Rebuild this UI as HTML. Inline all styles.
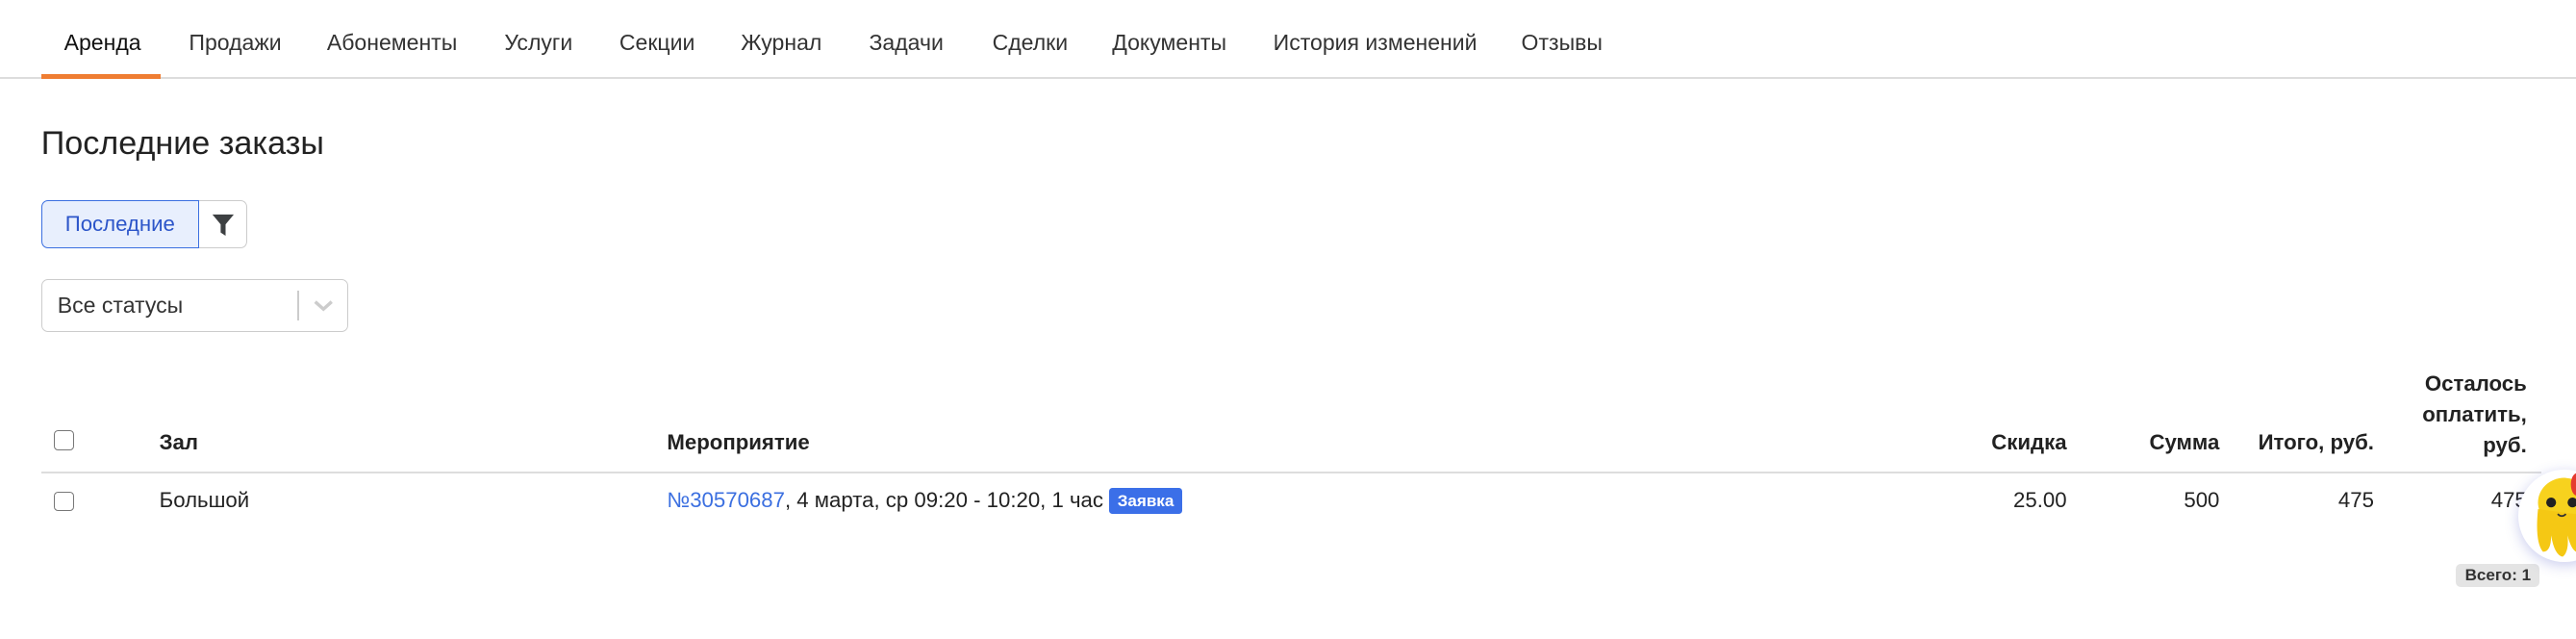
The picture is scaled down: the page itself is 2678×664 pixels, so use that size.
<!DOCTYPE html>
<html><head><meta charset="utf-8"><style>
html,body{margin:0;padding:0;background:#fff;overflow:hidden}
body{width:2678px;height:664px}
#r{zoom:1.70791;position:relative;width:1568px;height:389px;font-family:"Liberation Sans",Arial,sans-serif;color:#222}
.a{position:absolute;white-space:nowrap}
.tab{font-size:13.5px;color:#333;top:18px}
.th{font-weight:bold;font-size:13px;color:#222}
.td{font-size:13px;color:#222;top:297px}
.cb{position:absolute;width:11px;height:11px;border:1px solid #777;border-radius:2.5px;background:#fff}
</style></head><body><div id="r">
<div class="a tab" style="left:39px;color:#111">Аренда</div>
<div class="a tab" style="left:115px">Продажи</div>
<div class="a tab" style="left:199px">Абонементы</div>
<div class="a tab" style="left:307px">Услуги</div>
<div class="a tab" style="left:377px">Секции</div>
<div class="a tab" style="left:451px">Журнал</div>
<div class="a tab" style="left:529px">Задачи</div>
<div class="a tab" style="left:604px">Сделки</div>
<div class="a tab" style="left:677px">Документы</div>
<div class="a tab" style="left:775px">История изменений</div>
<div class="a tab" style="left:926px">Отзывы</div>
<div class="a" style="left:0;top:47px;width:1568px;height:1px;background:#ddd"></div>
<div class="a" style="left:25px;top:45px;width:73px;height:3px;background:#ef7d32"></div>

<div class="a" style="left:25px;top:76px;font-size:20px;color:#222">Последние заказы</div>

<div class="a" style="left:25px;top:122px;width:95px;height:28px;border:1px solid #3b6fe0;border-radius:4px 0 0 4px;background:#e8effd;color:#2c55c9;font-size:13px;line-height:28px;text-align:center">Последние</div>
<div class="a" style="left:121px;top:122px;width:29px;height:28px;border:1px solid #ccc;border-left:none;border-radius:0 4px 4px 0"></div>
<svg class="a" style="left:129px;top:130px" width="14" height="14" viewBox="0 0 14 14"><path d="M0.5 0.5H13.5L8.5 6.5V13.5L5.5 11.5V6.5Z" fill="#3d4042"/></svg>

<div class="a" style="left:25px;top:170px;width:186px;height:31px;border:1px solid #ccc;border-radius:4px"></div>
<div class="a" style="left:35px;top:178px;font-size:13.5px;color:#333">Все статусы</div>
<div class="a" style="left:181px;top:177px;width:1px;height:18px;background:#ccc"></div>
<svg class="a" style="left:191px;top:182px" width="12" height="8" viewBox="0 0 12 8"><path d="M1 1.5L6 6L11 1.5" stroke="#ccc" stroke-width="2" fill="none"/></svg>

<div class="cb" style="left:33px;top:262px"></div>
<div class="a th" style="left:97px;top:262px">Зал</div>
<div class="a th" style="left:406px;top:262px">Мероприятие</div>
<div class="a th" style="right:310px;top:262px">Скидка</div>
<div class="a th" style="right:217px;top:262px">Сумма</div>
<div class="a th" style="right:123px;top:262px">Итого, руб.</div>
<div class="a th" style="right:30px;top:224px;text-align:right;line-height:19px">Осталось<br>оплатить,<br>руб.</div>
<div class="a" style="left:25px;top:287px;width:1522px;height:1px;background:#ddd"></div>

<div class="cb" style="left:33px;top:299px"></div>
<div class="a td" style="left:97px">Большой</div>
<div class="a td" style="left:406px"><span style="color:#3b6fe0">№30570687</span>, 4 марта, ср 09:20 - 10:20, 1 час <span style="display:inline-block;background:#3b6fe8;color:#fff;font-size:10px;font-weight:bold;padding:2px 5px;border-radius:2px;vertical-align:1px">Заявка</span></div>
<div class="a td" style="right:310px">25.00</div>
<div class="a td" style="right:217px">500</div>
<div class="a td" style="right:123px">475</div>
<div class="a td" style="right:30px">475</div>

<div class="a" style="left:1495px;top:343px;width:51px;height:14px;background:#e4e4e4;border-radius:3px;font-size:10px;font-weight:bold;color:#333;line-height:14px;text-align:center">Всего: 1</div>

<div class="a" style="left:1533px;top:286px;width:56px;height:56px;border-radius:50%;background:#fff;box-shadow:0 2px 8px rgba(80,90,200,.3);overflow:hidden">
<svg width="56" height="56" viewBox="0 0 56 56"><ellipse cx="28" cy="20" rx="16" ry="15" fill="#f7d21e"/><path d="M12 24Q10 44 15 50Q20 50 20 40Q22 52 27 53Q31 50 30 40Q33 52 38 50Q42 44 42 28Z" fill="#f5c814"/><circle cx="20" cy="20" r="3" fill="#222"/><circle cx="33" cy="20" r="3" fill="#222"/><path d="M24 27Q26.5 29.5 29 27" stroke="#333" stroke-width="1" fill="none"/><ellipse cx="36" cy="9" rx="4" ry="7" fill="#e53a2f"/></svg>
</div>
</div></body></html>
